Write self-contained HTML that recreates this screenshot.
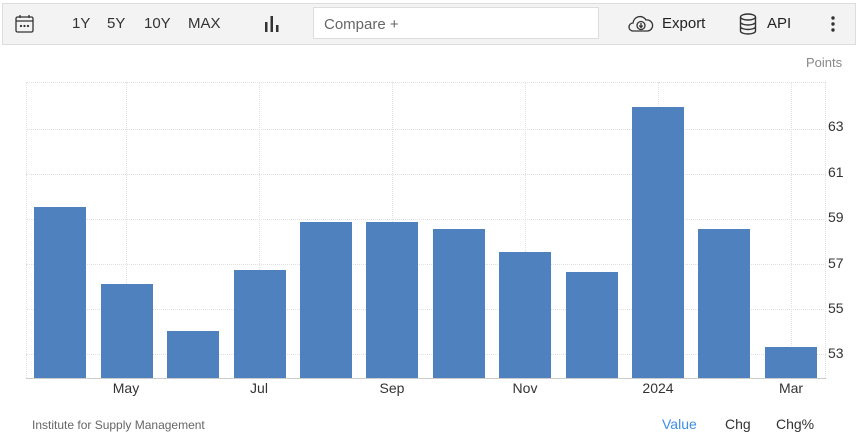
<!DOCTYPE html>
<html><head><style>
body{margin:0;width:856px;height:447px;background:#fff;font-family:"Liberation Sans",sans-serif;position:relative;overflow:hidden}
.tb{position:absolute;left:2px;top:3px;width:852px;height:40px;background:#f3f3f3;border:1px solid #ddd}
.t{position:absolute;font-size:15px;color:#333;top:15px}
.cmp{position:absolute;left:313px;top:7px;width:286px;height:32px;background:#fff;border:1px solid #ddd;box-sizing:border-box;font-size:15px;color:#666;padding:8px 10px}
.bar{position:absolute;background:#4e81bd;width:52px;bottom:69px}
.gv{position:absolute;top:82px;height:296px;border-left:1px dotted #e0e0e0}
.gh{position:absolute;left:26px;width:800px;border-top:1px dotted #e0e0e0}
.yl{position:absolute;left:828px;font-size:14px;color:#333}
.xl{position:absolute;top:380px;font-size:14px;color:#333;transform:translateX(-50%)}
</style></head><body>
<div class="tb"></div>
<svg style="position:absolute;left:15px;top:14px" width="19" height="19" viewBox="0 0 19 19" fill="none" stroke="#333" stroke-width="1.3"><rect x="1" y="3" width="17" height="15" rx="1.5"/><line x1="1" y1="7" x2="18" y2="7"/><line x1="5" y1="1" x2="5" y2="4"/><line x1="14" y1="1" x2="14" y2="4"/><circle cx="6" cy="12" r=".5" fill="#333"/><circle cx="9.5" cy="12" r=".5" fill="#333"/><circle cx="13" cy="12" r=".5" fill="#333"/></svg>
<span class="t" style="left:72px">1Y</span><span class="t" style="left:107px">5Y</span><span class="t" style="left:144px">10Y</span><span class="t" style="left:188px">MAX</span>
<svg style="position:absolute;left:264px;top:16px" width="16" height="16"><rect x="1" y="6" width="2.5" height="10" fill="#333"/><rect x="6.5" y="0" width="2.5" height="16" fill="#333"/><rect x="12" y="9" width="2.5" height="7" fill="#333"/></svg>
<div class="cmp">Compare +</div>
<svg style="position:absolute;left:628px;top:14px" width="26" height="19" viewBox="0 0 26 19" fill="none" stroke="#333" stroke-width="1.3"><path d="M7 17H5a4 4 0 0 1 0-8 7 7 0 0 1 13-3 5.5 5.5 0 0 1 2 11h-1z"/><circle cx="13" cy="11.5" r="4" fill="none"/><path d="M13 9v4M11.3 11.5l1.7 2 1.7-2" /></svg>
<span class="t" style="left:662px;color:#222">Export</span>
<svg style="position:absolute;left:739px;top:13px" width="18" height="22" viewBox="0 0 18 22" fill="none" stroke="#333" stroke-width="1.4"><ellipse cx="9" cy="4" rx="7.5" ry="3"/><path d="M1.5 4v14c0 1.7 3.4 3 7.5 3s7.5-1.3 7.5-3V4M1.5 9c0 1.7 3.4 3 7.5 3s7.5-1.3 7.5-3M1.5 13.5c0 1.7 3.4 3 7.5 3s7.5-1.3 7.5-3"/></svg>
<span class="t" style="left:767px;color:#222">API</span>
<svg style="position:absolute;left:831px;top:16px" width="4" height="16"><circle cx="2" cy="2" r="1.7" fill="#333"/><circle cx="2" cy="8" r="1.7" fill="#333"/><circle cx="2" cy="14" r="1.7" fill="#333"/></svg>
<span style="position:absolute;left:806px;top:55px;font-size:13px;color:#888">Points</span>
<div class="gh" style="top:82px"></div>
<div class="gh" style="top:129px"></div><div class="gh" style="top:174px"></div><div class="gh" style="top:219px"></div><div class="gh" style="top:264px"></div><div class="gh" style="top:309px"></div><div class="gh" style="top:354px"></div>
<div class="gv" style="left:26px"></div><div class="gv" style="left:126px"></div><div class="gv" style="left:259px"></div><div class="gv" style="left:392px"></div><div class="gv" style="left:525px"></div><div class="gv" style="left:658px"></div><div class="gv" style="left:791px"></div><div class="gv" style="left:825px"></div>
<div style="position:absolute;left:26px;top:378px;width:800px;border-top:1px solid #ccc"></div>
<div class="bar" style="left:34px;top:207px"></div>
<div class="bar" style="left:101px;top:284px"></div>
<div class="bar" style="left:167px;top:331px"></div>
<div class="bar" style="left:234px;top:270px"></div>
<div class="bar" style="left:300px;top:222px"></div>
<div class="bar" style="left:366px;top:222px"></div>
<div class="bar" style="left:433px;top:229px"></div>
<div class="bar" style="left:499px;top:252px"></div>
<div class="bar" style="left:566px;top:272px"></div>
<div class="bar" style="left:632px;top:107px"></div>
<div class="bar" style="left:698px;top:229px"></div>
<div class="bar" style="left:765px;top:347px"></div>
<span class="yl" style="top:118px">63</span><span class="yl" style="top:164px">61</span><span class="yl" style="top:209px">59</span><span class="yl" style="top:255px">57</span><span class="yl" style="top:300px">55</span><span class="yl" style="top:345px">53</span>
<span class="xl" style="left:126px">May</span><span class="xl" style="left:259px">Jul</span><span class="xl" style="left:392px">Sep</span><span class="xl" style="left:525px">Nov</span><span class="xl" style="left:658px">2024</span><span class="xl" style="left:791px">Mar</span>
<span style="position:absolute;left:32px;top:418px;font-size:12px;color:#666">Institute for Supply Management</span>
<span style="position:absolute;left:662px;top:416px;font-size:14px;color:#3d8ee8">Value</span>
<span style="position:absolute;left:725px;top:416px;font-size:14px;color:#333">Chg</span>
<span style="position:absolute;left:776px;top:416px;font-size:14px;color:#333">Chg%</span>
</body></html>
